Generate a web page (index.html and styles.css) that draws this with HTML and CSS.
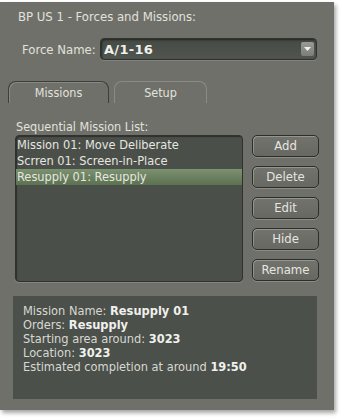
FILE: index.html
```html
<!DOCTYPE html>
<html>
<head>
<meta charset="utf-8">
<link rel="stylesheet" href="styles.css">
</head>
<body>
<div class="panel">
  <div class="title">BP US 1 - Forces and Missions:</div>
  <div class="force-row">
    <span class="force-label">Force Name:</span>
    <div class="select">
      <span class="select-value">A/1-16</span>
      <span class="select-btn"><svg width="7" height="4" viewBox="0 0 7 4"><path d="M0 0H7L3.5 4Z" fill="#f2f2ee"/></svg></span>
    </div>
  </div>
  <div class="tabs">
    <div class="tab active">Missions</div>
    <div class="tab">Setup</div>
  </div>
  <div class="list-label">Sequential Mission List:</div>
  <div class="list-row">
    <div class="list">
      <div class="item">Mission 01: Move Deliberate</div>
      <div class="item">Scrren 01: Screen-in-Place</div>
      <div class="item selected">Resupply 01: Resupply</div>
    </div>
    <div class="buttons">
      <div class="btn">Add</div>
      <div class="btn">Delete</div>
      <div class="btn">Edit</div>
      <div class="btn">Hide</div>
      <div class="btn">Rename</div>
    </div>
  </div>
  <div class="info">
    <div>Mission Name: <b>Resupply 01</b></div>
    <div>Orders: <b>Resupply</b></div>
    <div>Starting area around: <b>3023</b></div>
    <div>Location: <b>3023</b></div>
    <div>Estimated completion at around <b>19:50</b></div>
  </div>
</div>
</body>
</html>
```
FILE: styles.css
```css
html, body {
  margin: 0;
  padding: 0;
  background: #ffffff;
}
body {
  width: 342px;
  height: 419px;
  overflow: hidden;
  font-family: "DejaVu Sans", sans-serif;
  font-stretch: condensed;
  font-size: 12.5px;
  color: #e2e2dc;
}
.panel {
  box-sizing: border-box;
  margin-top: 2px;
  width: 334px;
  height: 408px;
  background: #6f706a;
  box-shadow: 2px 3px 4px rgba(0,0,0,0.35);
  padding: 7px 0 0 0;
  display: flex;
  flex-direction: column;
}
.title {
  padding-left: 18px;
  line-height: 15px;
  height: 15px;
  font-size: 13px;
}
.force-row {
  display: flex;
  align-items: center;
  margin-top: 14px;
  padding-left: 22px;
  height: 22px;
}
.force-label {
  width: 78px;
  font-size: 13px;
}
.select {
  box-sizing: border-box;
  width: 217px;
  height: 22px;
  border: 1px solid #2f322e;
  border-radius: 4px;
  background: linear-gradient(#454a44, #50554f);
  box-shadow: inset 1px 1px 2px rgba(0,0,0,0.5), 0 1px 0 rgba(255,255,255,0.12);
  display: flex;
  align-items: center;
  justify-content: space-between;
  padding: 0 2px 0 3px;
}
.select-value {
  font-weight: bold;
  font-size: 13px;
  font-stretch: normal;
  color: #f0f0ec;
  letter-spacing: 0.3px;
}
.select-btn {
  width: 13px;
  height: 14px;
  border-radius: 2px;
  background: linear-gradient(#9a9b95, #7c7d77);
  display: flex;
  align-items: center;
  justify-content: center;
}
.tabs {
  display: flex;
  margin-top: 21px;
  padding-left: 8px;
  gap: 5px;
  height: 22px;
}
.tab {
  box-sizing: border-box;
  width: 93px;
  height: 22px;
  border: 1px solid #8a8b85;
  border-bottom: none;
  border-radius: 8px 8px 0 0;
  text-align: center;
  line-height: 21px;
  color: #e2e2dc;
}
.tab.active {
  width: 101px;
  border-color: #3c3e3a;
  box-shadow: inset 1px 1px 0 rgba(255,255,255,0.18);
}
.list-label {
  margin-top: 16px;
  padding-left: 16px;
  line-height: 15px;
  height: 15px;
}
.list-row {
  display: flex;
  margin-top: 1px;
  padding-left: 15px;
  gap: 9px;
}
.list {
  box-sizing: border-box;
  width: 228px;
  height: 147px;
  background: #4b4f49;
  border: 1px solid #2f322e;
  border-radius: 4px;
  box-shadow: inset 1px 1px 1px rgba(0,0,0,0.4), 0 1px 0 rgba(255,255,255,0.15);
  padding-top: 1px;
}
.item {
  height: 16px;
  line-height: 16px;
  padding-left: 1px;
  font-size: 12.7px;
  color: #e6e6e0;
}
.item.selected {
  background: linear-gradient(#7b9170, #5b7150);
}
.buttons {
  display: flex;
  flex-direction: column;
  gap: 9px;
  padding-top: 0px;
}
.btn {
  box-sizing: border-box;
  width: 67px;
  height: 22px;
  border: 1px solid #2c2e2a;
  border-radius: 5px;
  background: linear-gradient(#72736d, #676862);
  box-shadow: inset 1px 1px 0 rgba(255,255,255,0.25), 0 1px 0 rgba(255,255,255,0.2);
  text-align: center;
  line-height: 20px;
  font-size: 13px;
  color: #e6e6e0;
}
.info {
  box-sizing: border-box;
  margin: 14px 0 0 13px;
  width: 304px;
  height: 103px;
  background: #4b504a;
  padding: 8px 0 0 10px;
  line-height: 14px;
  font-size: 12.7px;
  color: #d8d8d2;
}
.info b {
  color: #f0f0ec;
}
```
